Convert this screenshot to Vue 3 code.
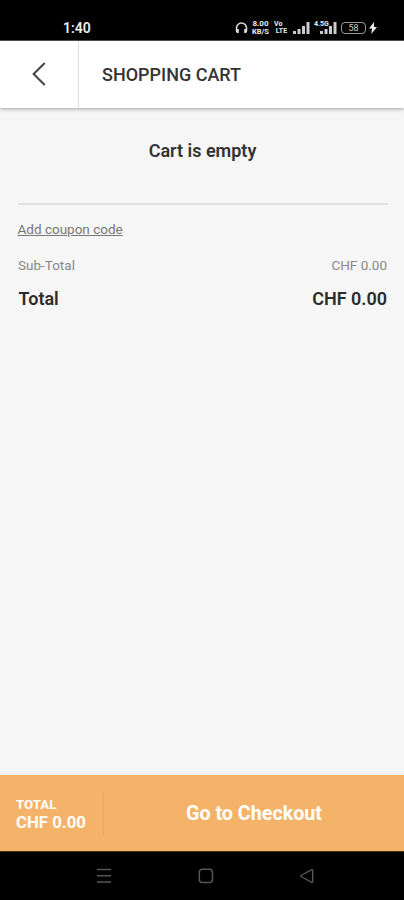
<script setup>
const total = 'CHF 0.00'
</script>

<template>
  <div class="screen">
    <div class="status">
      <span class="clock">1:40</span>
      <div class="indicators">
        <svg class="headset" width="13" height="12" viewBox="0 0 13 12">
          <path d="M1.5 9V6a5 5 0 0 1 10 0v3" fill="none" stroke="#ddd" stroke-width="1.5" />
          <path d="M1 7h2.8v4H2L1 10zM12 7H9.2v4H11l1-1z" fill="#ddd" />
        </svg>
        <span class="speed"><b>8.00</b><b class="unit">KB/S</b></span>
        <span class="volte"><b>Vo</b><b>LTE</b></span>
        <svg class="signal" width="17" height="12" viewBox="0 0 17 12">
          <path d="M0 9h3v3H0zM4.5 7h3v5h-3zM9 4h3v8H9zM13.5 0h3v12h-3z" fill="#ccc" />
        </svg>
        <div class="mobile">
          <span class="net">4.5G</span>
          <svg width="17" height="12" viewBox="0 0 17 12">
            <path d="M0 9h3v3H0zM4.5 7h3v5h-3zM9 4h3v8H9zM13.5 0h3v12h-3z" fill="#ccc" />
          </svg>
        </div>
        <span class="battery">58</span>
        <svg class="bolt" width="8" height="12" viewBox="0 0 8 12">
          <path d="M5 0 0 6.5h3L2.3 12 8 5H5z" fill="#eee" />
        </svg>
      </div>
    </div>

    <header class="header">
      <button class="back" aria-label="Back">
        <svg width="14" height="24" viewBox="0 0 14 24">
          <path d="M12.7 1 1.6 12l11.1 11" fill="none" stroke="#444" stroke-width="2" />
        </svg>
      </button>
      <h1 class="title">SHOPPING CART</h1>
    </header>

    <main class="content">
      <p class="empty">Cart is empty</p>
      <hr class="rule" />
      <a class="coupon">Add coupon code</a>
      <div class="row sub"><span>Sub-Total</span><span class="amount">{{ total }}</span></div>
      <div class="row sum"><span class="label">Total</span><span class="amount">{{ total }}</span></div>
    </main>

    <footer class="checkout">
      <div class="due">
        <span class="due-label">TOTAL</span>
        <span class="due-value">{{ total }}</span>
      </div>
      <div class="go"><span>Go to Checkout</span></div>
    </footer>

    <nav class="nav">
      <svg width="16" height="16" viewBox="0 0 16 16"><path d="M1 1.5h14M1 7.8h14M1 14h14" stroke="#555" stroke-width="1.6" /></svg>
      <svg width="16" height="16" viewBox="0 0 16 16"><rect x="1.3" y="1.3" width="13.2" height="13.2" rx="3" fill="none" stroke="#555" stroke-width="1.5" /></svg>
      <svg width="16" height="16" viewBox="0 0 16 16"><path d="M13.7 2.2v11.6c0 .7-.5.9-1 .6L2 8.5c-.5-.3-.5-.7 0-1l10.7-5.9c.5-.3 1-.1 1 .6z" fill="none" stroke="#555" stroke-width="1.4" /></svg>
    </nav>
  </div>
</template>

<style>
body { background: #f6f6f6; }
</style>

<style scoped>
.screen {
  width: 404px;
  height: 900px;
  display: flex;
  flex-direction: column;
  overflow: hidden;
  background: #f6f6f6;
  font-family: Roboto, "Liberation Sans", sans-serif;
  color: #333;
}
.screen * { box-sizing: border-box; }
.status {
  height: 41px;
  flex: none;
  display: flex;
  align-items: flex-start;
  justify-content: space-between;
  padding: 20px 27px 0 63px;
  background: #000;
  border-bottom: 1px solid #555;
  color: #eee;
}
.clock { font-size: 14px; line-height: 16px; font-weight: 600; }
.indicators { display: flex; padding-top: 2px; }
.headset { margin-right: 3px; }
.speed, .volte { display: flex; flex-direction: column; text-align: center; }
.speed { width: 19px; margin: -2px 4px 0 0; font-size: 8px; line-height: 8px; }
.unit { font-size: 7.5px; line-height: 8px; }
.volte { width: 15px; margin: -1px 4px 0 0; font-size: 7px; line-height: 7px; }
.volte b:first-child { text-align: left; }
.signal { margin-right: 4px; }
.mobile { position: relative; width: 23px; padding-left: 6px; margin-right: 4px; }
.mobile svg { display: block; }
.net {
  position: absolute;
  left: 0;
  top: -1px;
  font-size: 7px;
  line-height: 7px;
  font-weight: 700;
  background: #000;
}
.battery {
  width: 25px;
  height: 12px;
  margin-right: 3px;
  border: 1.5px solid #999;
  border-radius: 4px;
  font-size: 9px;
  line-height: 10px;
  text-align: center;
  color: #ccc;
}
.header {
  position: relative;
  height: 67px;
  flex: none;
  display: flex;
  align-items: center;
  background: #fff;
  box-shadow: 0 1px 4px rgba(0, 0, 0, 0.35);
}
.back {
  width: 79px;
  height: 100%;
  padding: 0 0 1px;
  border: 0;
  border-right: 1px solid #ddd;
  background: none;
  display: flex;
  align-items: center;
  justify-content: center;
}
.title { margin: 0 0 0 23px; font-size: 18px; line-height: 20px; font-weight: 500; }
.content { flex: 1; padding: 32px 17px 0 18px; }
.empty { margin: 0 0 41px; font-size: 18px; line-height: 22px; font-weight: 600; text-align: center; }
.rule { height: 2px; margin: 0 -1px 0 0; border: 0; background: #e0e0e0; }
.coupon {
  display: block;
  margin: 15px 0 0 -0.5px;
  font-size: 13.5px;
  line-height: 18px;
  color: #777;
  text-decoration: underline;
}
.row { display: flex; justify-content: space-between; }
.sub { margin-top: 18px; font-size: 13.5px; line-height: 18px; color: #888; }
.sum { margin-top: 14px; font-size: 18px; line-height: 22px; font-weight: 600; color: #2c2c2c; }
.sum .label { margin-left: 0.5px; }
.checkout { height: 76px; flex: none; display: flex; align-items: center; background: #f5b369; color: #fff; }
.due { width: 104px; height: 45px; border-right: 1px solid #eda95f; padding: 5px 0 0 16px; display: flex; flex-direction: column; font-weight: 700; }
.due-label { font-size: 13.3px; line-height: 17px; }
.due-value { font-size: 16.8px; line-height: 18px; }
.go { flex: 1; padding-top: 2px; text-align: center; font-size: 19.7px; line-height: 24px; font-weight: 700; }
.nav { height: 49px; flex: none; display: flex; justify-content: space-between; align-items: center; padding: 0 89px 0 96px; background: #000; border-top: 1px solid #4b3720; }
</style>
